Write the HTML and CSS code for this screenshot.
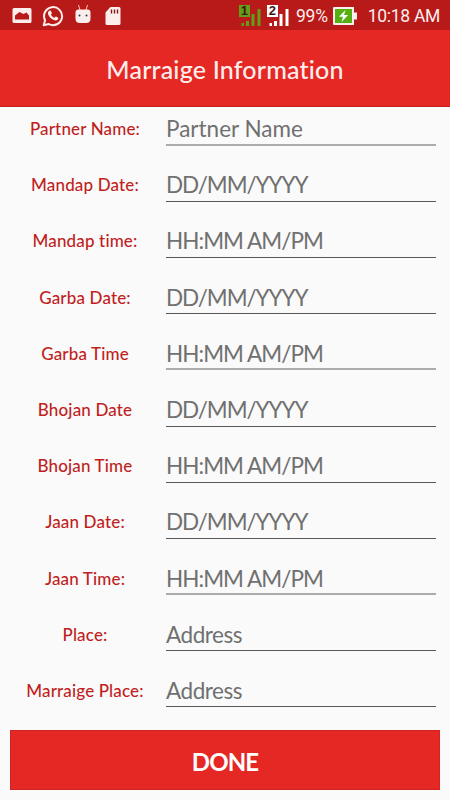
FILE: index.html
```html
<!DOCTYPE html>
<html lang="en">
<head>
    <meta charset="UTF-8">
    <meta name="viewport" content="width=device-width, initial-scale=1.0">
    <title>Marraige Information</title>
    <link rel="stylesheet" href="styles.css">
</head>
<body>

    <div class="status-bar">
        <div class="notifications">
            <svg class="icon-photo" width="20" height="16" viewBox="0 0 20 16">
                <path fill="#fdeeee" fill-rule="evenodd" d="M2 0h16a1.500 1.500 0 0 1 1.500 1.500v12a1.500 1.500 0 0 1-1.500 1.500H2a1.500 1.500 0 0 1-1.500-1.500v-12A1.500 1.500 0 0 1 2 0zM3 11.500h14V7.500l-2.500-3-3 1.500-4-2L3 7.500z"/>
            </svg>
            <svg class="icon-whatsapp" width="22" height="22" viewBox="0 0 22 22">
                <path fill="none" stroke="#fdeeee" stroke-width="2" stroke-linejoin="round" d="M1.700 20.300l1.400-5A9 9 0 1 1 6.700 19z"/>
                <path fill="#fdeeee" d="M7.700 5.600c.7-.3 1.200 0 1.500.8l.6 1.500c.2.500-.8 1.300-.9 1.600.7 1.500 1.900 2.600 3.500 3.200.5-.2 1-1.300 1.500-1.200l2 1c.8.4.2 1.700-.3 2.200-1.100 1-2.700.9-4.300.1-2.500-1.100-4.200-3-5.200-5.500-.5-1.400.2-3.100 1.600-3.700z"/>
            </svg>
            <svg class="icon-bot" width="16" height="20" viewBox="0 0 16 20">
                <path fill="none" stroke="#fdc4c4" stroke-width="1" d="M3.500 1l1.500 5M12.500 1L11 6"/>
                <path fill="#fdeeee" d="M.5 8.500Q.5 5.500 3.500 5.500h9q3 0 3 3v6q0 4.500-4.500 4.500h-6q-4.500 0-4.500-4.500z"/>
                <circle cx="4.500" cy="11.500" r="1" fill="#333"/>
                <circle cx="11.500" cy="11.500" r="1" fill="#333"/>
            </svg>
            <svg class="icon-sd" width="16" height="18" viewBox="0 0 16 18">
                <path fill="#fdeeee" d="M5.500 0H14a1.500 1.500 0 0 1 1.500 1.500v15A1.500 1.500 0 0 1 14 18H2A1.500 1.500 0 0 1 .5 16.500V5.500z"/>
                <path stroke="#7d1715" stroke-width="1.400" d="M6.500 2.500v4M9.500 2.500v4M12.500 2.500v4"/>
            </svg>
        </div>

        <div class="indicators">
            <div class="signal signal-one">
                <span class="sim">1</span>
                <svg width="23" height="22" viewBox="0 0 23 22">
                    <path fill="currentColor" d="M2.500 18h2.500v3H2.500zM7 16h3v5H7zM12.500 9h3v12h-3zM18.500 4h3v17h-3z"/>
                </svg>
            </div>
            <div class="signal signal-two">
                <span class="sim">2</span>
                <svg width="23" height="22" viewBox="0 0 23 22">
                    <path fill="currentColor" d="M2.500 18h2.500v3H2.500zM7 16h3v5H7zM12.500 9h3v12h-3zM18.500 4h3v17h-3z"/>
                </svg>
            </div>
            <span class="percent">99%</span>
            <svg class="icon-battery" width="24" height="18" viewBox="0 0 24 18">
                <path fill="#fdeeee" d="M1 0h20v5.500h3v7h-3V18H1q-1 0-1-1V1q0-1 1-1z"/>
                <path fill="#55b012" d="M2 2h17v14H2z"/>
                <path fill="#fff" d="M12.500 3L6 9.800h4L8.500 15l6.700-7H11z"/>
            </svg>
            <span class="clock">10:18 AM</span>
        </div>
    </div>

    <header>
        <h1>Marraige Information</h1>
    </header>

    <div class="form">
        <div class="row">
            <span class="label">Partner Name:</span>
            <span class="field name">Partner Name</span>
        </div>
        <div class="row">
            <span class="label">Mandap Date:</span>
            <span class="field date">DD/MM/YYYY</span>
        </div>
        <div class="row">
            <span class="label">Mandap time:</span>
            <span class="field time">HH:MM AM/PM</span>
        </div>
        <div class="row">
            <span class="label">Garba Date:</span>
            <span class="field date">DD/MM/YYYY</span>
        </div>
        <div class="row">
            <span class="label">Garba Time</span>
            <span class="field time">HH:MM AM/PM</span>
        </div>
        <div class="row">
            <span class="label">Bhojan Date</span>
            <span class="field date">DD/MM/YYYY</span>
        </div>
        <div class="row">
            <span class="label">Bhojan Time</span>
            <span class="field time">HH:MM AM/PM</span>
        </div>
        <div class="row">
            <span class="label">Jaan Date:</span>
            <span class="field date">DD/MM/YYYY</span>
        </div>
        <div class="row">
            <span class="label">Jaan Time:</span>
            <span class="field time">HH:MM AM/PM</span>
        </div>
        <div class="row">
            <span class="label">Place:</span>
            <span class="field address">Address</span>
        </div>
        <div class="row">
            <span class="label">Marraige Place:</span>
            <span class="field address">Address</span>
        </div>
    </div>

    <button class="done">DONE</button>

</body>
</html>
```
FILE: styles.css
```css
* {
    box-sizing: border-box;
}

body {
    font-family: Lato, "Open Sans", sans-serif;
    font-variant-ligatures: none;
    background-color: #fafafa;
    margin: 0;
    height: 800px;
    overflow: hidden;
}

.status-bar {
    display: flex;
    justify-content: space-between;
    height: 30px;
    padding: 0 10px 0 12px;
    background-color: #b71a18;
    color: #fdeeee;
}

.notifications, .indicators {
    display: flex;
    align-items: center;
    height: 32px;
}

.icon-whatsapp {
    margin-left: 10px;
}

.icon-bot {
    margin: -4px 0 0 11px;
}

.icon-sd {
    margin-left: 14px;
}

.signal {
    position: relative;
    height: 22px;
    color: #61a018;
}

.signal-one {
    margin-right: 5px;
}

.signal-two {
    color: #fff;
}

/* SIM number sits over the signal bars */
.sim {
    position: absolute;
    top: 0;
    left: 0;
    width: 11px;
    height: 12px;
    background-color: currentColor;
    font: bold 13px/12px "Liberation Sans", sans-serif;
    text-align: center;
}

.sim::first-letter {
    color: #431311;
}

.percent, .clock {
    font-family: Roboto, sans-serif;
    font-size: 17.5px;
    line-height: 34px;
}

.percent {
    margin: 0 5px 0 6px;
    letter-spacing: -0.2px;
}

.clock {
    margin-left: 11px;
    letter-spacing: -0.3px;
}

header {
    display: flex;
    align-items: center;
    justify-content: center;
    height: 77px;
    background-color: #e52823;
    border-bottom: 1px solid #c3211e;
}

h1 {
    margin: 2px 0 0;
    color: #fdeeee;
    font-size: 25px;
    font-weight: 500;
    letter-spacing: 0.2px;
}

.row {
    display: grid;
    grid-template-columns: 170px 270px;
    height: 56.2px;
    margin-left: -4px;
    white-space: nowrap;
}

.label {
    padding: 11px 0 0 8px;
    color: #c01f1e;
    font-size: 17px;
    font-weight: 500;
    letter-spacing: 0.15px;
    line-height: 22px;
    text-align: center;
}

.field {
    height: 38.6px;
    padding-top: 7px;
    border-bottom: 1px solid #58585a;
    color: #707070;
    font-size: 22.5px;
    line-height: 29px;
}

.row:nth-child(4n+1) .field {
    border-bottom: 2px solid #acacac;
}

.date {
    letter-spacing: -1.1px;
}

.time {
    letter-spacing: -0.95px;
}

.address {
    letter-spacing: -0.45px;
}

.done {
    display: block;
    width: 430px;
    height: 60px;
    margin: 5px 10px 0;
    padding: 2px 0 0;
    border: 1px solid #d02422;
    background-color: #e52823;
    color: #fff;
    font-family: inherit;
    font-size: 24px;
    font-weight: bold;
    letter-spacing: -0.9px;
}
```
